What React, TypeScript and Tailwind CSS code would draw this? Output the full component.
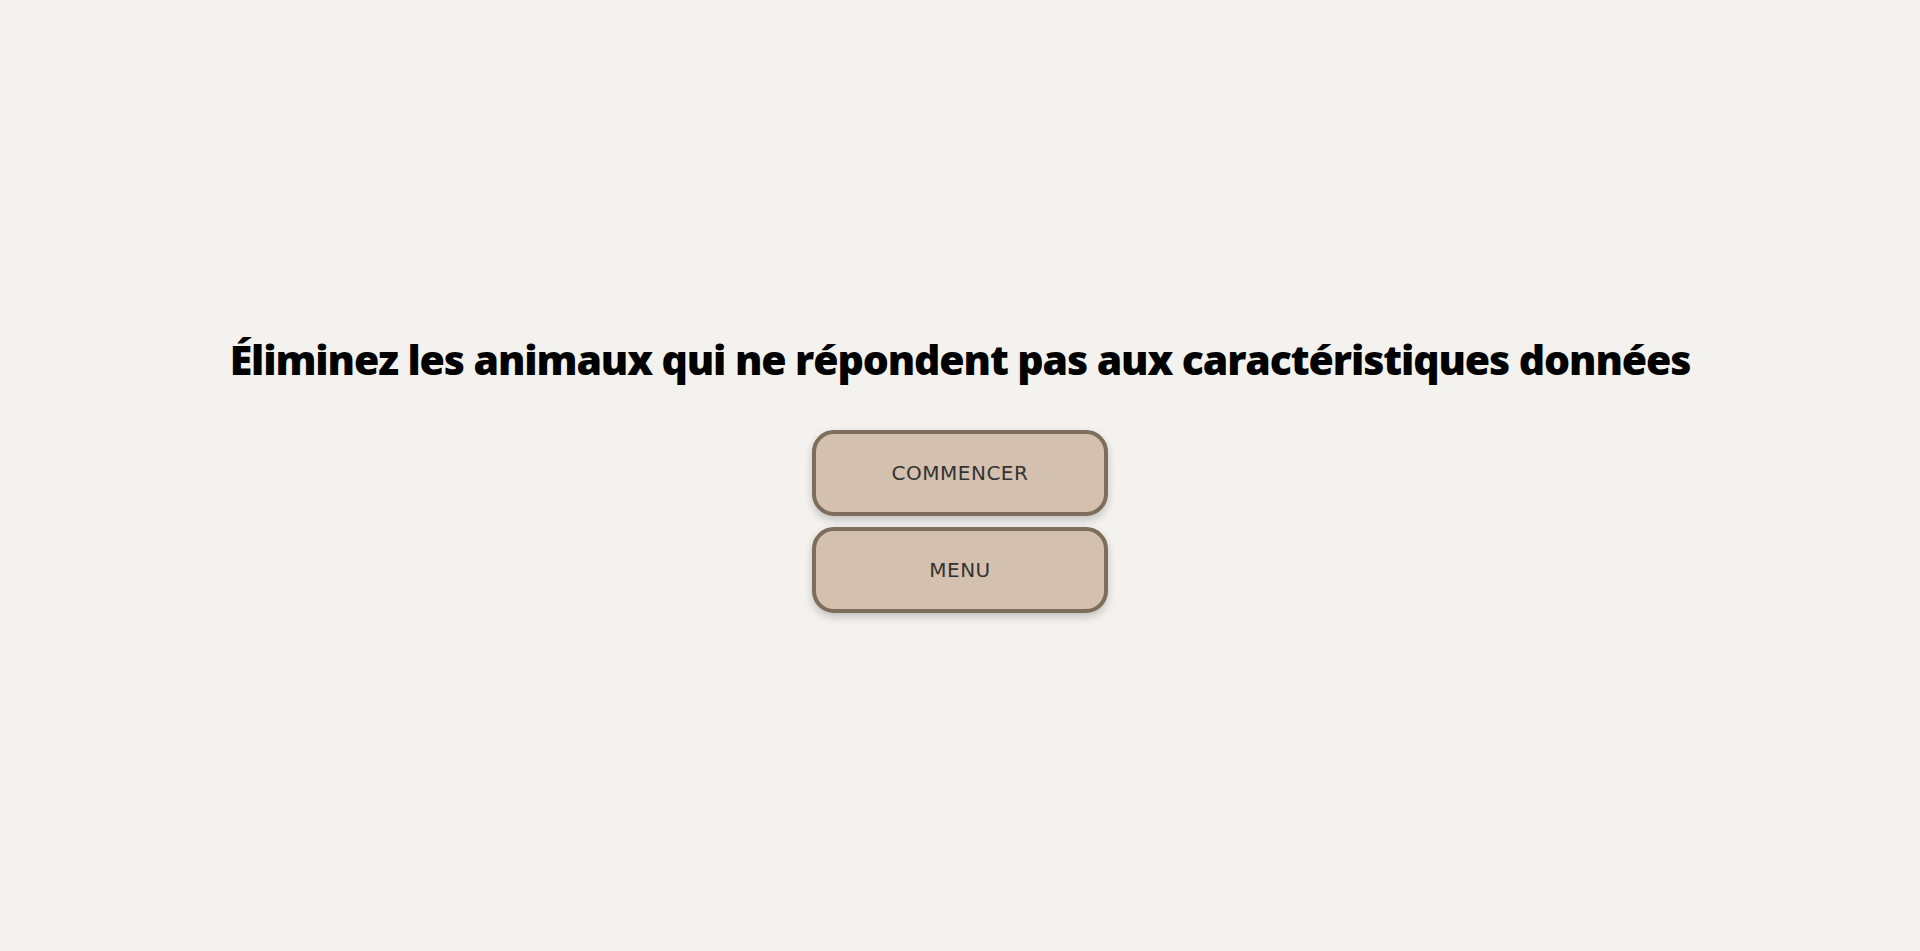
export default function App() {
  return (
    <div className="min-h-screen w-full bg-[#f3f2ee] flex flex-col items-center justify-center pb-[4px]">
      <h1
        className="text-[41px] font-extrabold text-black leading-tight tracking-[-1.1px] mb-[44px]"
        style={{ fontFamily: '"Open Sans", sans-serif' }}
      >
        Éliminez les animaux qui ne répondent pas aux caractéristiques données
      </h1>
      <div className="flex flex-col items-center gap-[11px]">
        {["COMMENCER", "MENU"].map((label) => (
          <button
            key={label}
            className="w-[296px] h-[86px] rounded-[22px] border-[4px] border-[#7d6e5c] bg-[#d4c0ae] text-[#333] text-[20px] tracking-[0.5px] shadow-[0_4px_8px_rgba(0,0,0,0.2)]"
            style={{ fontFamily: '"DejaVu Sans", sans-serif' }}
          >
            {label}
          </button>
        ))}
      </div>
    </div>
  );
}
